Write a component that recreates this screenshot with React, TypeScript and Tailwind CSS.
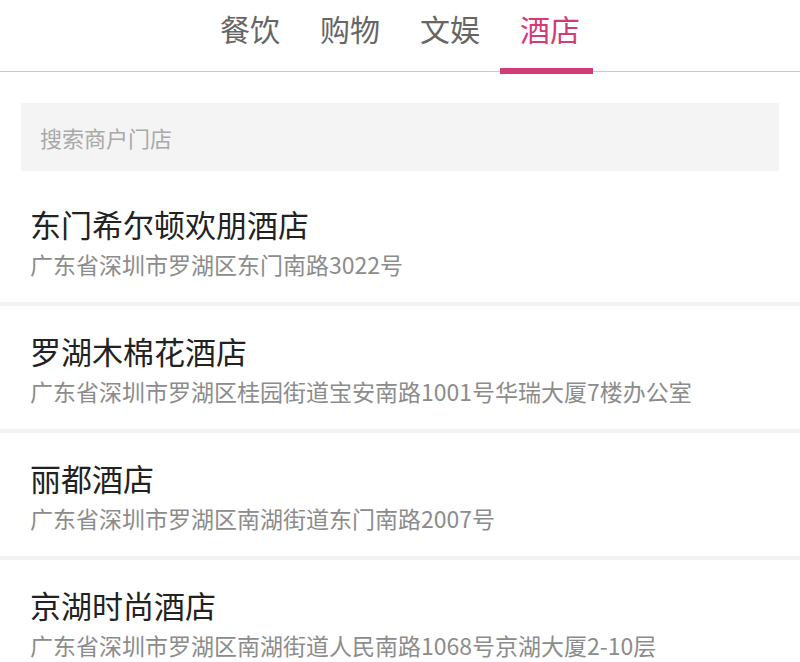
import React from "react";

const tabs = ["餐饮", "购物", "文娱", "酒店"];
const items = [
  { name: "东门希尔顿欢朋酒店", addr: "广东省深圳市罗湖区东门南路3022号" },
  { name: "罗湖木棉花酒店", addr: "广东省深圳市罗湖区桂园街道宝安南路1001号华瑞大厦7楼办公室" },
  { name: "丽都酒店", addr: "广东省深圳市罗湖区南湖街道东门南路2007号" },
  { name: "京湖时尚酒店", addr: "广东省深圳市罗湖区南湖街道人民南路1068号京湖大厦2-10层" },
];

export default function App() {
  return (
    <div
      className="w-[800px] h-[662px] overflow-hidden bg-white"
      style={{ fontFamily: '"Noto Sans CJK SC", "Noto Sans", sans-serif' }}
    >
      <div className="relative h-[72px] border-b border-[#c8c8c8] flex justify-center">
        {tabs.map((t, i) => (
          <div key={t} className="relative w-[100px] h-[71px] flex justify-center">
            <span
              className={
                "text-[30px] leading-[56px] " +
                (i === 3 ? "text-[#d43a77]" : "text-[#666666]")
              }
            >
              {t}
            </span>
            {i === 3 && (
              <div className="absolute left-0 top-[68px] w-[93px] h-[6px] bg-[#d43a77]" />
            )}
          </div>
        ))}
      </div>
      <div className="pt-[31px] pb-[8px] px-[21px]">
        <div className="h-[68px] bg-[#f4f4f4] flex items-center pl-[19px] text-[22px] text-[#a9a9a9]">
          搜索商户门店
        </div>
      </div>
      <div className="flex flex-col">
        {items.map((it, i) => (
          <div key={i} className="flex flex-col">
            <div className="h-[123px] px-[30px] pt-[27px] flex flex-col">
              <div className="text-[31px] leading-[36px] text-[#222222] whitespace-nowrap">{it.name}</div>
              <div className="mt-[6px] text-[23px] leading-[32px] text-[#8c8c8c] whitespace-nowrap">
                {it.addr}
              </div>
            </div>
            <div className="h-[4px] bg-[#f2f2f2]" />
          </div>
        ))}
      </div>
    </div>
  );
}
